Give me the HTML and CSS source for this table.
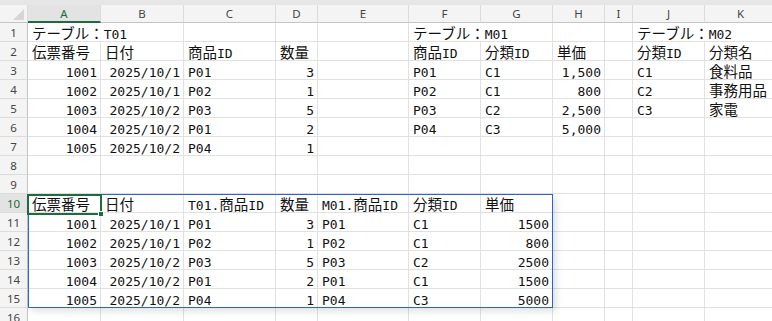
FILE: index.html
```html
<!DOCTYPE html>
<html lang="ja">
<head>
<meta charset="utf-8">
<title>Book1</title>
<link rel="stylesheet" href="styles.css">
</head>
<body>
<div class="app">
  <div class="band"></div>
  <div class="sheet">
    <!-- column headers -->
    <div class="h corner"></div>
    <div class="h hs">A</div><div class="h">B</div><div class="h">C</div><div class="h">D</div>
    <div class="h">E</div><div class="h">F</div><div class="h">G</div><div class="h">H</div>
    <div class="h">I</div><div class="h">J</div><div class="h">K</div>

    <!-- 1 -->
    <div class="r">1</div>
    <div class="c w2"><span class="j">テーブル：</span>T01</div>
    <div class="c"></div><div class="c"></div><div class="c"></div>
    <div class="c w2"><span class="j">テーブル：</span>M01</div>
    <div class="c"></div><div class="c"></div>
    <div class="c w2"><span class="j">テーブル：</span>M02</div>

    <!-- 2 -->
    <div class="r">2</div>
    <div class="c"><span class="j">伝票番号</span></div>
    <div class="c"><span class="j">日付</span></div>
    <div class="c"><span class="j">商品</span>ID</div>
    <div class="c"><span class="j">数量</span></div>
    <div class="c"></div>
    <div class="c"><span class="j">商品</span>ID</div>
    <div class="c"><span class="j">分類</span>ID</div>
    <div class="c"><span class="j">単価</span></div>
    <div class="c"></div>
    <div class="c"><span class="j">分類</span>ID</div>
    <div class="c"><span class="j">分類名</span></div>

    <!-- 3 -->
    <div class="r">3</div>
    <div class="c n">1001</div><div class="c n">2025/10/1</div><div class="c">P01</div><div class="c n">3</div>
    <div class="c"></div>
    <div class="c">P01</div><div class="c">C1</div><div class="c n">1,500</div>
    <div class="c"></div>
    <div class="c">C1</div><div class="c"><span class="j">食料品</span></div>

    <!-- 4 -->
    <div class="r">4</div>
    <div class="c n">1002</div><div class="c n">2025/10/1</div><div class="c">P02</div><div class="c n">1</div>
    <div class="c"></div>
    <div class="c">P02</div><div class="c">C1</div><div class="c n">800</div>
    <div class="c"></div>
    <div class="c">C2</div><div class="c"><span class="j">事務用品</span></div>

    <!-- 5 -->
    <div class="r">5</div>
    <div class="c n">1003</div><div class="c n">2025/10/2</div><div class="c">P03</div><div class="c n">5</div>
    <div class="c"></div>
    <div class="c">P03</div><div class="c">C2</div><div class="c n">2,500</div>
    <div class="c"></div>
    <div class="c">C3</div><div class="c"><span class="j">家電</span></div>

    <!-- 6 -->
    <div class="r">6</div>
    <div class="c n">1004</div><div class="c n">2025/10/2</div><div class="c">P01</div><div class="c n">2</div>
    <div class="c"></div>
    <div class="c">P04</div><div class="c">C3</div><div class="c n">5,000</div>
    <div class="c"></div>
    <div class="c"></div><div class="c"></div>

    <!-- 7 -->
    <div class="r">7</div>
    <div class="c n">1005</div><div class="c n">2025/10/2</div><div class="c">P04</div><div class="c n">1</div>
    <div class="c"></div><div class="c"></div><div class="c"></div><div class="c"></div>
    <div class="c"></div><div class="c"></div><div class="c"></div>

    <!-- 8 -->
    <div class="r">8</div>
    <div class="c"></div><div class="c"></div><div class="c"></div><div class="c"></div>
    <div class="c"></div><div class="c"></div><div class="c"></div><div class="c"></div>
    <div class="c"></div><div class="c"></div><div class="c"></div>

    <!-- 9 -->
    <div class="r">9</div>
    <div class="c"></div><div class="c"></div><div class="c"></div><div class="c"></div>
    <div class="c"></div><div class="c"></div><div class="c"></div><div class="c"></div>
    <div class="c"></div><div class="c"></div><div class="c"></div>

    <!-- 10 -->
    <div class="r rs">10</div>
    <div class="c"><span class="j">伝票番号</span></div>
    <div class="c"><span class="j">日付</span></div>
    <div class="c">T01.<span class="j">商品</span>ID</div>
    <div class="c"><span class="j">数量</span></div>
    <div class="c">M01.<span class="j">商品</span>ID</div>
    <div class="c"><span class="j">分類</span>ID</div>
    <div class="c"><span class="j">単価</span></div>
    <div class="c"></div><div class="c"></div><div class="c"></div><div class="c"></div>

    <!-- 11 -->
    <div class="r">11</div>
    <div class="c n">1001</div><div class="c n">2025/10/1</div><div class="c">P01</div><div class="c n">3</div>
    <div class="c">P01</div><div class="c">C1</div><div class="c n">1500</div>
    <div class="c"></div><div class="c"></div><div class="c"></div><div class="c"></div>

    <!-- 12 -->
    <div class="r">12</div>
    <div class="c n">1002</div><div class="c n">2025/10/1</div><div class="c">P02</div><div class="c n">1</div>
    <div class="c">P02</div><div class="c">C1</div><div class="c n">800</div>
    <div class="c"></div><div class="c"></div><div class="c"></div><div class="c"></div>

    <!-- 13 -->
    <div class="r">13</div>
    <div class="c n">1003</div><div class="c n">2025/10/2</div><div class="c">P03</div><div class="c n">5</div>
    <div class="c">P03</div><div class="c">C2</div><div class="c n">2500</div>
    <div class="c"></div><div class="c"></div><div class="c"></div><div class="c"></div>

    <!-- 14 -->
    <div class="r">14</div>
    <div class="c n">1004</div><div class="c n">2025/10/2</div><div class="c">P01</div><div class="c n">2</div>
    <div class="c">P01</div><div class="c">C1</div><div class="c n">1500</div>
    <div class="c"></div><div class="c"></div><div class="c"></div><div class="c"></div>

    <!-- 15 -->
    <div class="r">15</div>
    <div class="c n">1005</div><div class="c n">2025/10/2</div><div class="c">P04</div><div class="c n">1</div>
    <div class="c">P04</div><div class="c">C3</div><div class="c n">5000</div>
    <div class="c"></div><div class="c"></div><div class="c"></div><div class="c"></div>

    <!-- 16 -->
    <div class="r">16</div>
    <div class="c"></div><div class="c"></div><div class="c"></div><div class="c"></div>
    <div class="c"></div><div class="c"></div><div class="c"></div><div class="c"></div>
    <div class="c"></div><div class="c"></div><div class="c"></div>

    <div class="range"></div>
    <div class="cursor"><span class="handle"></span></div>
  </div>
</div>
</body>
</html>
```

FILE: styles.css
```css
* {
  box-sizing: border-box;
}

body {
  margin: 0;
  background: #ffffff;
  overflow: hidden;
}

.app {
  width: 772px;
  height: 321px;
  overflow: hidden;
  background: #ffffff;
}

/* strip under the formula bar */
.band {
  height: 5px;
  background: #e6e6e6;
}

.sheet {
  position: relative;
  display: grid;
  grid-template-columns: 28px 73px 83px 92px 42px 91px 72px 72px 52px 28px 72px 72px;
  grid-template-rows: 18px;
  grid-auto-rows: 19px;
  width: 777px;
  font-family: "DejaVu Sans Mono", "Liberation Mono", monospace;
  font-size: 13px;
  color: #111111;
}

/* column headers */
.h {
  display: flex;
  align-items: center;
  justify-content: center;
  background: #f4f4f4;
  border-right: 1px solid #dcdcdc;
  border-bottom: 1px solid #c4c4c4;
  font-family: "Noto Sans", "Open Sans", sans-serif;
  font-size: 11.5px;
  color: #444444;
}

.hs {
  background: #e3e3e3;
  color: #1b6b3f;
  border-bottom: 2px solid #1d6b40;
}

.corner {
  position: relative;
}

.corner::after {
  content: "";
  position: absolute;
  right: 3px;
  bottom: 2px;
  width: 11px;
  height: 11px;
  background: #d6d6d6;
  clip-path: polygon(100% 0, 100% 100%, 0 100%);
}

/* row headers */
.r {
  display: flex;
  align-items: center;
  justify-content: center;
  padding-top: 1px;
  background: #f4f4f4;
  border-right: 1px solid #c4c4c4;
  border-bottom: 1px solid #dcdcdc;
  font-family: "Noto Sans", "Open Sans", sans-serif;
  font-size: 11.5px;
  color: #444444;
}

.rs {
  background: #e3e3e3;
  color: #1b6b3f;
}

/* cells */
.c {
  padding: 3px 3px 0 4px;
  line-height: 18px;
  white-space: nowrap;
  overflow: hidden;
  border-right: 1px solid #e1e1e1;
  border-bottom: 1px solid #e1e1e1;
}

.n {
  text-align: right;
}

.w2 {
  grid-column: span 2;
}

.j {
  font-family: "Noto Sans CJK JP", sans-serif;
  font-size: 14.5px;
  line-height: 14px;
}

/* outline of the joined range A10:G15 */
.range {
  position: absolute;
  left: 28px;
  top: 189px;
  width: 525px;
  height: 114px;
  border: 1px solid #2a66c8;
  box-shadow: 3px 3px 7px rgba(0, 0, 0, 0.13);
  pointer-events: none;
}

/* active cell A10 */
.cursor {
  position: absolute;
  left: 27px;
  top: 189px;
  width: 75px;
  height: 21px;
  border: 2px solid #1d6b40;
  pointer-events: none;
}

.handle {
  position: absolute;
  right: -4px;
  bottom: -4px;
  width: 6px;
  height: 6px;
  background: #1d6b40;
  border: 1px solid #ffffff;
}
```
